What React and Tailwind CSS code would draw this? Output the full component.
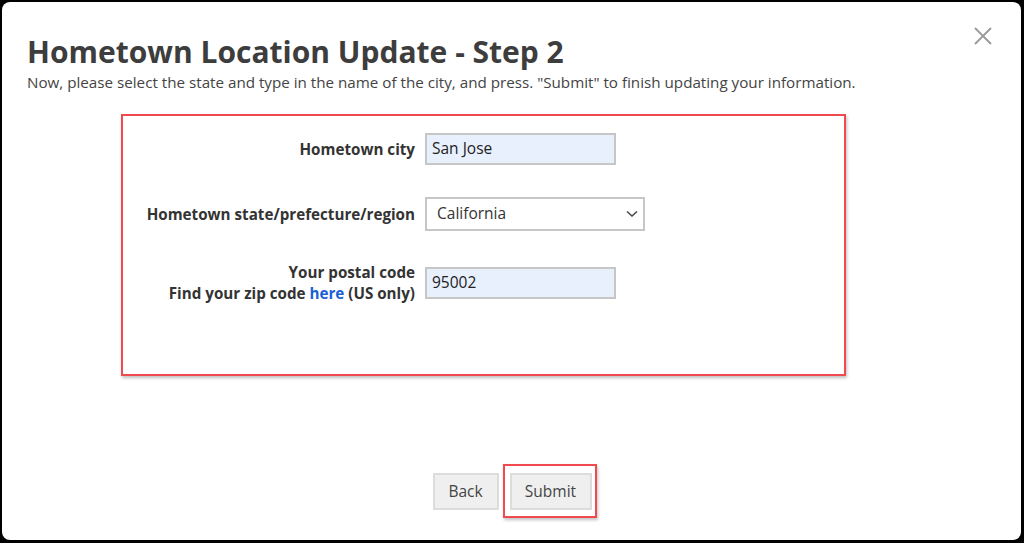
import React from 'react';

const font = { fontFamily: '"Open Sans", "Noto Sans", sans-serif' };

function CloseIcon() {
  return (
    <svg width="18" height="18" viewBox="0 0 18 18" className="block">
      <path d="M1 1 L17 17 M17 1 L1 17" stroke="#9a9a9a" strokeWidth="1.8" />
    </svg>
  );
}

export default function App() {
  return (
    <div className="w-[1024px] h-[543px] bg-black pt-[2px] pl-[2px] pr-[3px] pb-[3px] text-[#444]" style={font}>
      <div className="relative h-full bg-white rounded-[8px] flex flex-col pl-[25px] pr-[20px]">
        <button className="absolute right-[29px] top-[25px] p-0">
          <CloseIcon />
        </button>

        <h1 className="mt-[32px] text-[30px] leading-[36px] font-bold text-[#3d3d3d]">
          Hometown Location Update - Step 2
        </h1>
        <p className="mt-[2px] text-[15.2px] leading-[20px] text-[#444]">
          Now, please select the state and type in the name of the city, and press. "Submit" to finish updating your information.
        </p>

        <div className="mt-[22px] ml-[94px] w-[725px] h-[262px] border-2 border-[#f04a4e] shadow-[1px_2px_3px_rgba(0,0,0,0.25)] pt-[17px]">
          <div className="grid grid-cols-[292px_auto] gap-x-[10px] items-center">
            <label className="text-right text-[15.2px] font-bold text-[#333]">Hometown city</label>
            <div className="h-[32px] w-[191px] bg-[#e8f0fe] border-2 border-[#c6c6c6] px-[5px] flex items-center text-[15.5px] text-[#222]">
              San Jose
            </div>

            <label className="mt-[32px] text-right text-[15.2px] font-bold text-[#333]">Hometown state/prefecture/region</label>
            <div className="mt-[32px] h-[34px] w-[220px] bg-white border-2 border-[#c6c6c6] pl-[10px] pr-[5px] flex items-center justify-between text-[15.5px] text-[#333]">
              <span>California</span>
              <svg width="12" height="8" viewBox="0 0 12 8">
                <path d="M1 1.5 L6 6 L11 1.5" fill="none" stroke="#444" strokeWidth="1.5" />
              </svg>
            </div>

            <label className="mt-[31px] text-right text-[15.2px] leading-[21px] font-bold text-[#333]">
              Your postal code
              <br />
              Find your zip code <a className="text-[#1a5fd6]">here</a> (US only)
            </label>
            <div className="mt-[31px] h-[32px] w-[191px] bg-[#e8f0fe] border-2 border-[#c6c6c6] px-[5px] flex items-center text-[15.5px] text-[#222]">
              95002
            </div>
          </div>
        </div>

        <div className="flex-1" />

        <div className="flex justify-center gap-[11px] pb-[30px] pr-[4px]">
          <button className="h-[37px] w-[66px] bg-[#efefef] border-2 border-[#dcdcdc] text-[15.5px] text-[#444]">
            Back
          </button>
          <div className="relative">
            <button className="h-[37px] w-[82px] bg-[#efefef] border-2 border-[#dcdcdc] text-[15.5px] text-[#444]">
              Submit
            </button>
            <div className="absolute -left-[7px] -top-[9px] -right-[5px] -bottom-[8px] border-2 border-[#f04a4e] shadow-[1px_2px_3px_rgba(0,0,0,0.25)] pointer-events-none" />
          </div>
        </div>
      </div>
    </div>
  );
}
